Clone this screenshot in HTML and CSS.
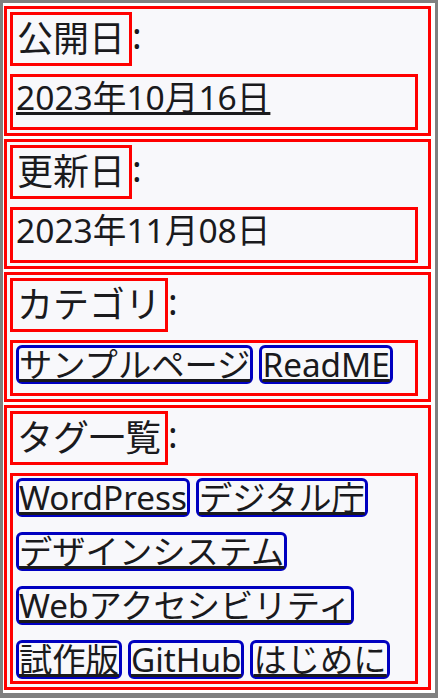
FILE: index.html
```html
<!DOCTYPE html>
<html lang="ja">
<head>
<meta charset="utf-8">
<title>メタ情報</title>
<link rel="stylesheet" href="styles.css">
</head>
<body>
<div class="frame">
  <dl class="meta">
    <div class="sec">
      <dt class="term"><span class="lbl">公開日</span>:</dt>
      <dd class="val val-text"><a class="date-link" href="#">2023年10月16日</a></dd>
    </div>
    <div class="sec">
      <dt class="term"><span class="lbl">更新日</span>:</dt>
      <dd class="val val-text">2023年11月08日</dd>
    </div>
    <div class="sec">
      <dt class="term"><span class="lbl">カテゴリ</span>:</dt>
      <dd class="val val-tags">
        <a class="tag" href="#">サンプルページ</a>
        <a class="tag" href="#">ReadME</a>
      </dd>
    </div>
    <div class="sec">
      <dt class="term"><span class="lbl">タグ一覧</span>:</dt>
      <dd class="val val-tags">
        <a class="tag" href="#">WordPress</a>
        <a class="tag" href="#">デジタル庁</a>
        <a class="tag" href="#">デザインシステム</a>
        <a class="tag" href="#">Webアクセシビリティ</a>
        <a class="tag" href="#">試作版</a>
        <a class="tag" href="#">GitHub</a>
        <a class="tag" href="#">はじめに</a>
      </dd>
    </div>
  </dl>
</div>
</body>
</html>
```
FILE: styles.css
```css
html, body {
  margin: 0;
}
body {
  background: #808080;
  padding: 3px 3px 5px 3px;
  font-family: "Noto Sans", "Noto Sans CJK JP", sans-serif;
  color: #1a1a1d;
}
.frame {
  background: #ffffff;
  padding: 3px 4px 3px 1px;
}
.meta {
  margin: 0;
  display: flex;
  flex-direction: column;
  gap: 3px;
}
.sec {
  border: 3px solid #ff0000;
  background: #f8f8fb;
  padding: 3px 10px 3px 3px;
  display: flex;
  flex-direction: column;
  gap: 8px;
}
.term {
  margin: 0;
  font-size: 36px;
  line-height: 48px;
  height: 54px;
  display: flex;
  align-items: flex-start;
}
.lbl {
  display: inline-block;
  border: 3px solid #ff0000;
  padding: 0 4px;
  line-height: 48px;
  height: 48px;
}
.val {
  margin: 0;
  border: 3px solid #ff0000;
}
.val-text {
  font-size: 33.6px;
  line-height: 40px;
  padding: 0 3px 10px 3px;
}
.date-link {
  color: inherit;
  text-decoration: underline;
}
.val-tags {
  display: flex;
  flex-wrap: wrap;
  align-content: flex-start;
  gap: 15px 6px;
  padding: 2px 3px 2px 3px;
  min-height: 46px;
}
.tag {
  display: inline-block;
  border: 3px solid #0000c0;
  border-radius: 6px;
  font-size: 33.3px;
  line-height: 33px;
  height: 33px;
  color: inherit;
  text-decoration: underline;
  white-space: nowrap;
}
```
